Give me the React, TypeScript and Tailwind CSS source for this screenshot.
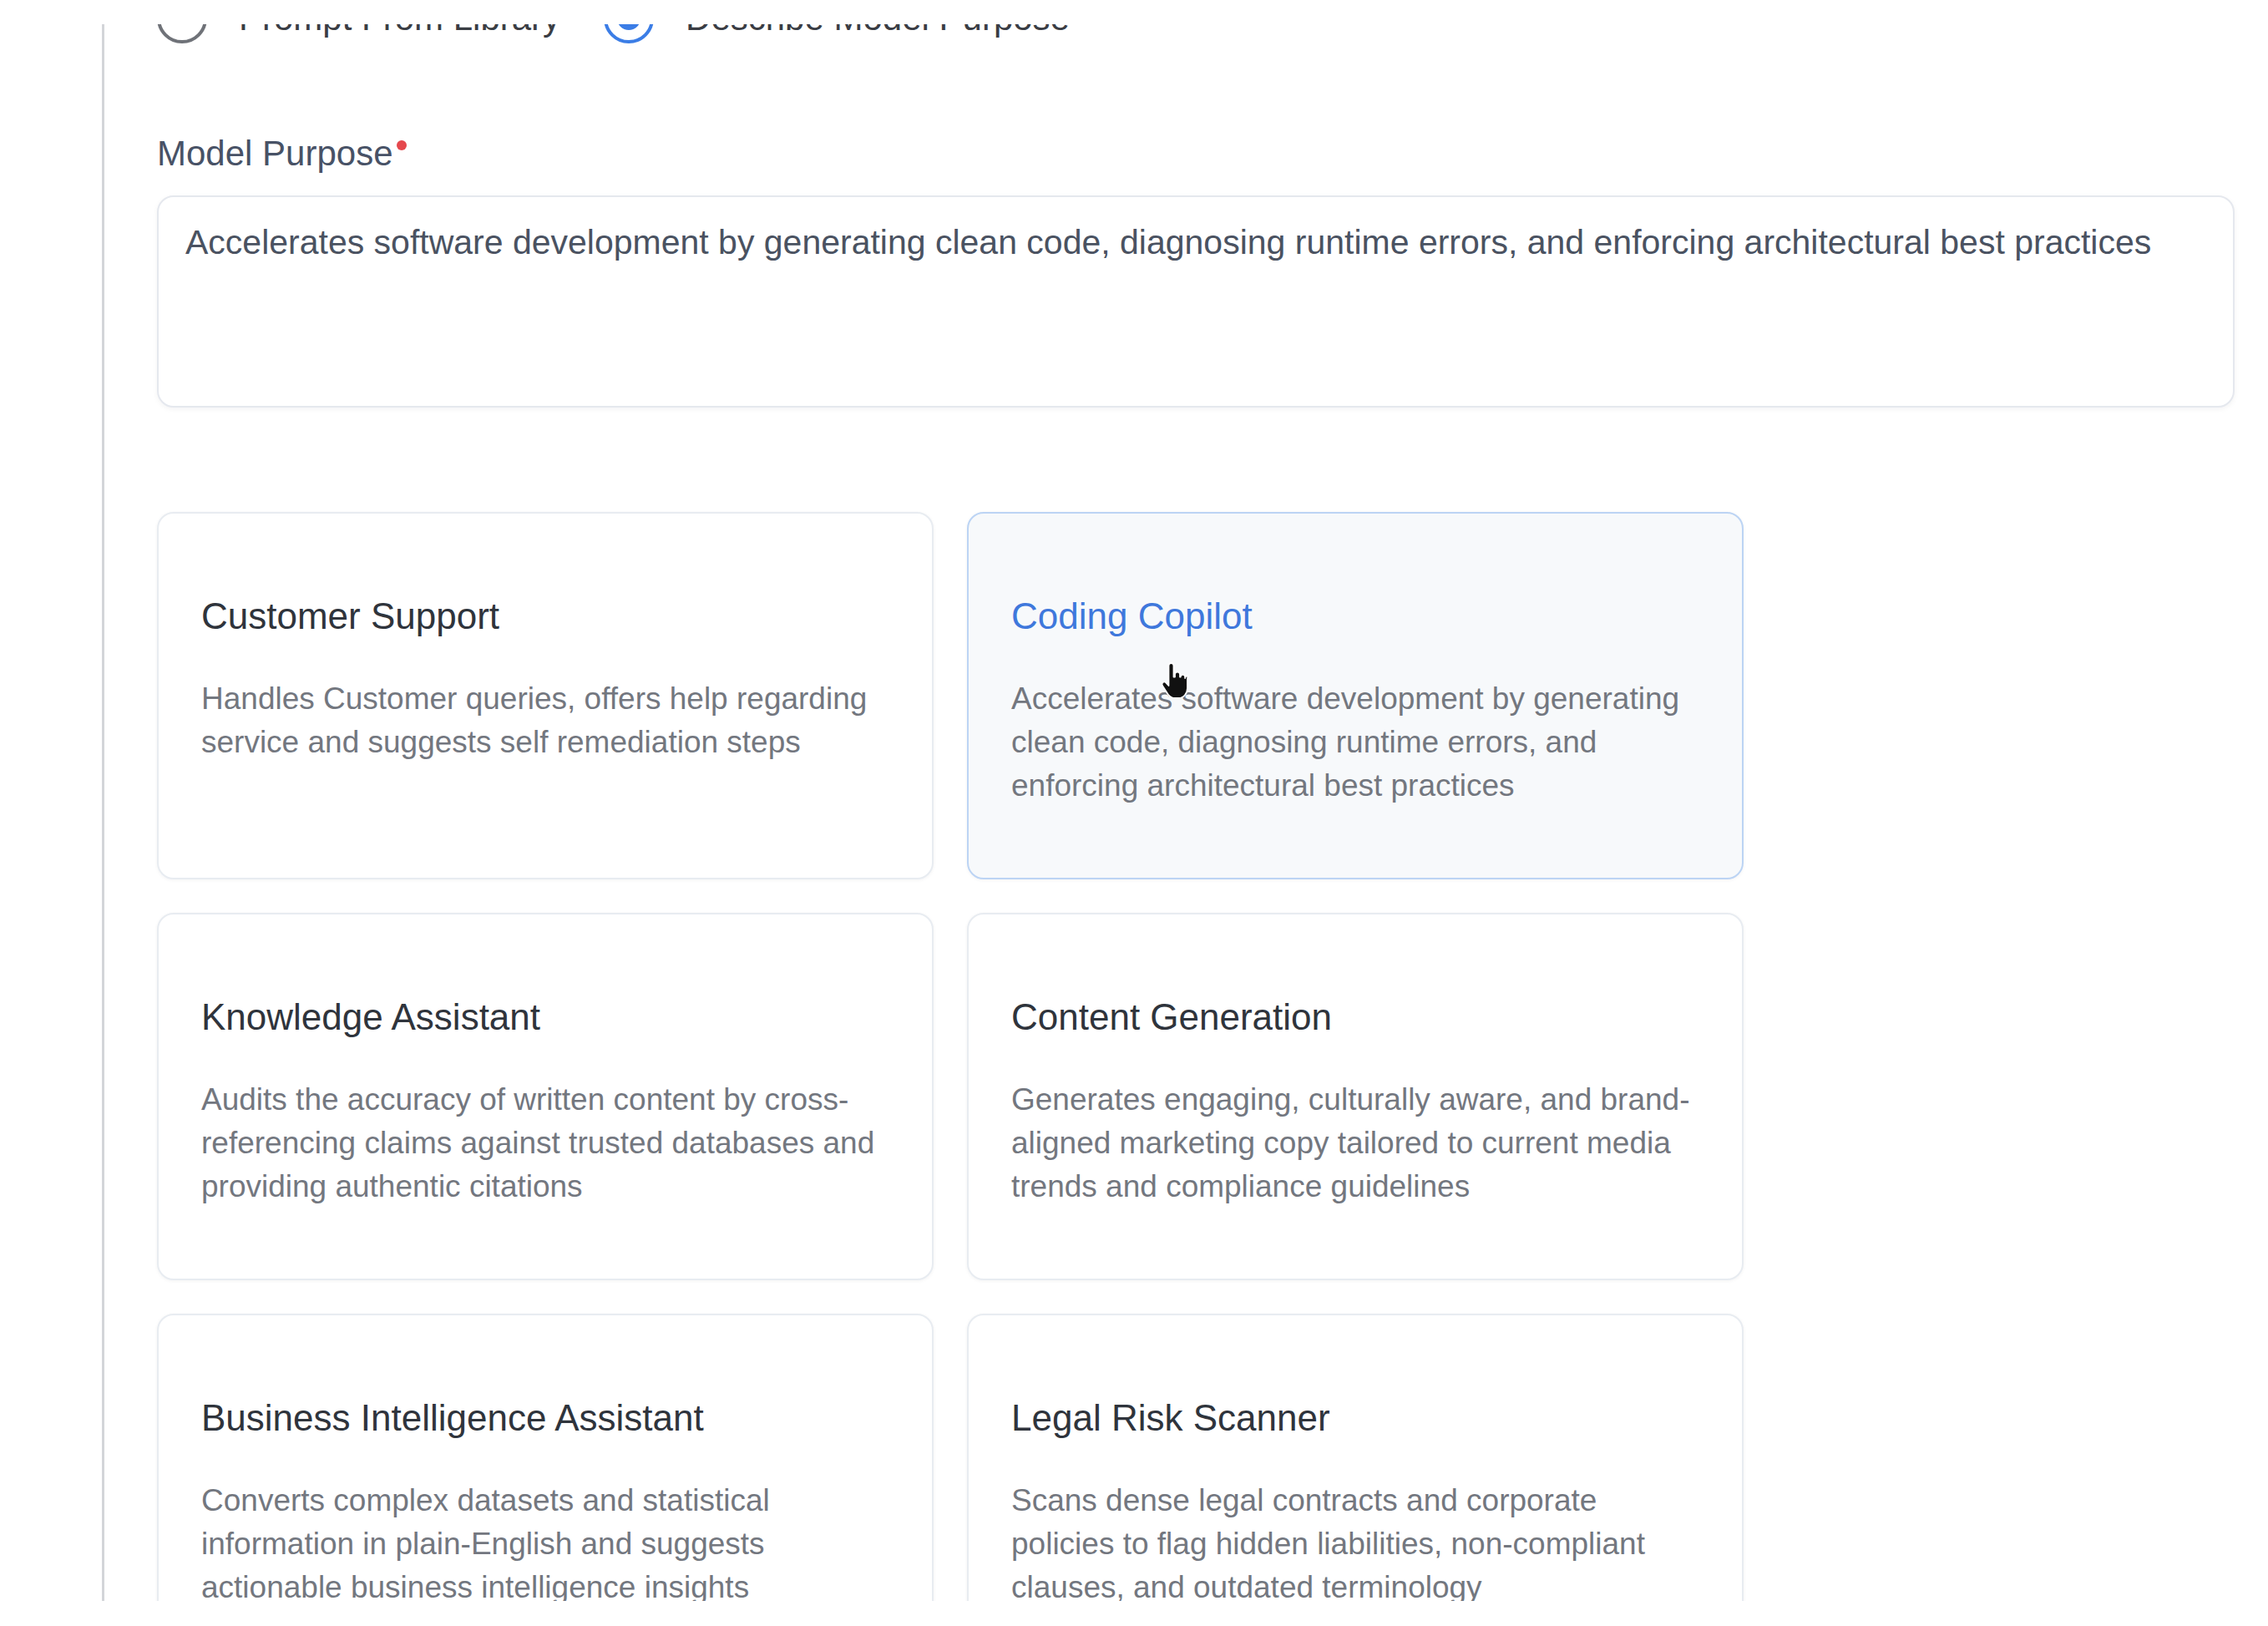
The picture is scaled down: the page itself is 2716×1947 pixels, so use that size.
import React from 'react';

interface UseCase {
  title: string;
  description: string;
  selected?: boolean;
}

const useCases: UseCase[] = [
  {
    title: 'Customer Support',
    description: 'Handles Customer queries, offers help regarding service and suggests self remediation steps',
  },
  {
    title: 'Coding Copilot',
    description:
      'Accelerates software development by generating clean code, diagnosing runtime errors, and enforcing architectural best practices',
    selected: true,
  },
  {
    title: 'Knowledge Assistant',
    description:
      'Audits the accuracy of written content by cross-referencing claims against trusted databases and providing authentic citations',
  },
  {
    title: 'Content Generation',
    description:
      'Generates engaging, culturally aware, and brand-aligned marketing copy tailored to current media trends and compliance guidelines',
  },
  {
    title: 'Business Intelligence Assistant',
    description:
      'Converts complex datasets and statistical information in plain-English and suggests actionable business intelligence insights',
  },
  {
    title: 'Legal Risk Scanner',
    description:
      'Scans dense legal contracts and corporate policies to flag hidden liabilities, non-compliant clauses, and outdated terminology',
  },
];

const HandCursor = () => (
  <svg width="36" height="48" viewBox="0 0 24 32" className="absolute left-[229px] top-[176px]">
    <path
      d="M9 2c1.1 0 2 .9 2 2v9h1v-2c0-1.1.9-2 2-2s2 .9 2 2v2h.5c0-1 .8-1.8 1.8-1.8s1.8.8 1.8 1.8v1c0-1 .8-1.7 1.7-1.7S22 14 22 15v7c0 4-3 8-7 8h-3c-2.5 0-4-1-5.5-3L2 20c-.6-.9-.4-2 .4-2.6.8-.6 2-.4 2.6.4L7 20V4c0-1.1.9-2 2-2z"
      fill="#111"
      stroke="#fff"
      strokeWidth="1.2"
      strokeLinejoin="round"
    />
  </svg>
);

const Radio = ({ checked, label }: { checked?: boolean; label: string }) => (
  <div className="flex items-center gap-[38px]">
    {checked ? (
      <span className="flex h-[60px] w-[60px] items-center justify-center rounded-full border-[4px] border-[#3b7de6]">
        <span className="h-[28px] w-[28px] rounded-full bg-[#3b7de6]" />
      </span>
    ) : (
      <span className="h-[60px] w-[60px] rounded-full border-[4px] border-[#6f7278]" />
    )}
    <span className="text-[42px] leading-[63px] text-[#3a3d44]">{label}</span>
  </div>
);

const UseCaseCard = ({ title, description, selected }: UseCase) => (
  <div
    className={`relative h-[440px] rounded-[20px] border-2 px-[51px] pt-[90px] shadow-[0_1px_4px_rgba(15,23,42,0.05)] ${
      selected ? 'border-[#bcd4f4] bg-[#f7f9fb]' : 'border-[#e8ecf1] bg-white'
    }`}
  >
    <h3 className={`text-[44px] leading-[66px] ${selected ? 'text-[#3f78dc]' : 'text-[#2f343c]'}`}>{title}</h3>
    <p className="mt-[40px] text-[37px] leading-[52px] text-[#73777f]">{description}</p>
    {selected && <HandCursor />}
  </div>
);

export default function App() {
  return (
    <div className="h-[1947px] w-full bg-white pt-[29px] font-['Liberation_Sans',Arial,sans-serif]">
      <div className="h-[1888px] overflow-hidden">
        <div className="ml-[122px] flow-root h-full border-l-[3px] border-[#d3d5d9] pl-[63px]">
          <div className="-mt-[39px] flex items-center gap-[52px]">
            <Radio label="Prompt From Library" />
            <Radio checked label="Describe Model Purpose" />
          </div>

          <div className="mt-[99px] flex items-start text-[42px] leading-[63px] text-[#485266]">
            Model Purpose
            <span className="ml-[4px] mt-[16px] h-[12px] w-[12px] rounded-full bg-[#e5484d]" />
          </div>

          <div className="mt-[19px] h-[254px] w-[2488px] rounded-[20px] border-2 border-[#e5e8ee] bg-white px-[32px] pt-[24px] shadow-[0_2px_6px_rgba(15,23,42,0.05)]">
            <p className="text-[41px] leading-[61px] text-[#4a5261]">
              Accelerates software development by generating clean code, diagnosing runtime errors, and enforcing
              architectural best practices
            </p>
          </div>

          <div className="mt-[125px] grid w-[1900px] grid-cols-2 gap-[40px]">
            {useCases.map((u) => (
              <UseCaseCard key={u.title} {...u} />
            ))}
          </div>
        </div>
      </div>
    </div>
  );
}
